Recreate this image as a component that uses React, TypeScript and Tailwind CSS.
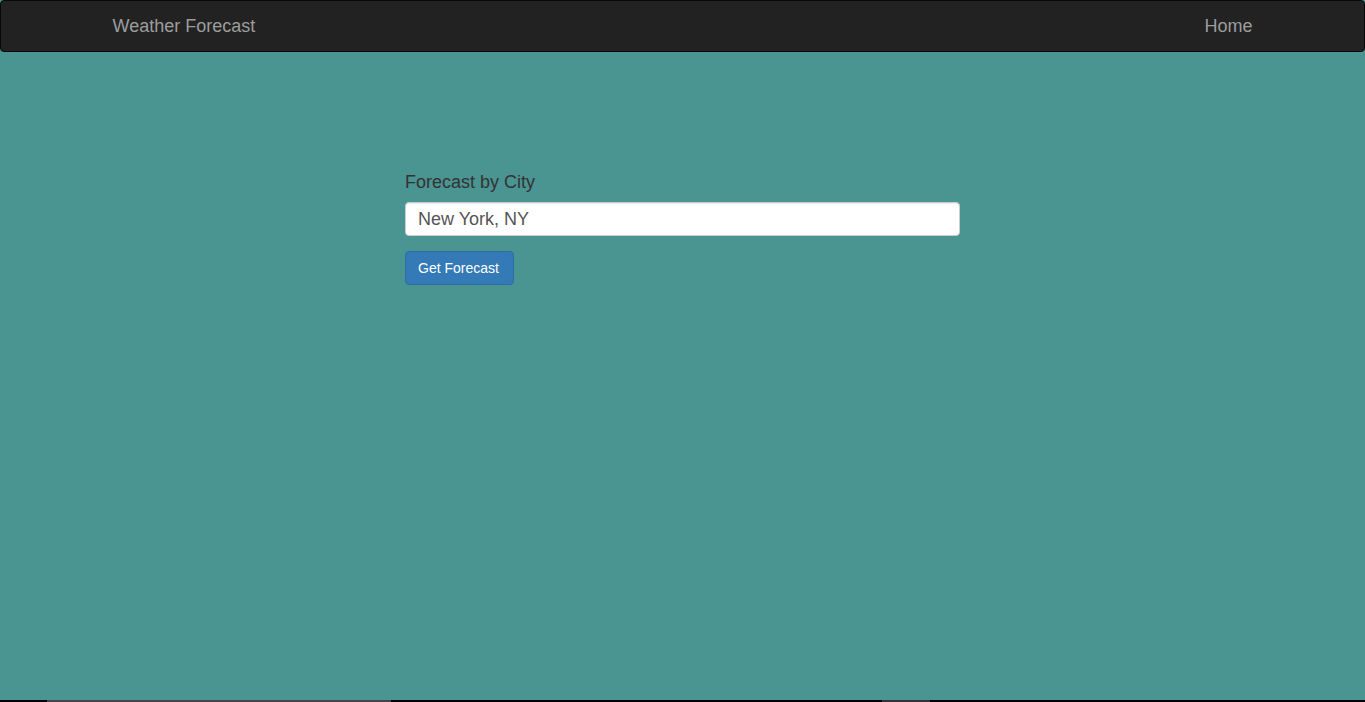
export default function App() {
  return (
    <div
      className="flex h-[702px] w-full flex-col bg-black"
      style={{ fontFamily: '"Liberation Sans", Arial, Helvetica, sans-serif' }}
    >
      <div className="flex h-[700px] flex-col bg-[#4a9491]">
        <nav className="h-[52px] rounded-[4px] border border-[#080808] bg-[#222222]">
          <div className="mx-auto flex h-[50px] w-[1170px] items-center justify-between px-[15px]">
            <a className="px-0 text-[18px] leading-[20px] text-[#9d9d9d]">Weather Forecast</a>
            <a className="pr-0 text-[18px] leading-[20px] text-[#9d9d9d]">Home</a>
          </div>
        </nav>
        <div className="mx-auto w-[1170px] pt-[118px]">
          <div className="ml-[307.5px] w-[555px]">
            <label className="mb-[6px] inline-block text-[18px] leading-[25.7px] text-[#333333]">
              Forecast by City
            </label>
            <input
              type="text"
              defaultValue="New York, NY"
              className="block h-[34px] w-full rounded-[4px] border border-[#cccccc] bg-white px-[12px] pt-[7px] pb-[5px] text-[18px] text-[#555555] shadow-[inset_0_1px_1px_rgba(0,0,0,0.075)] outline-none"
            />
            <button className="mt-[15px] h-[34px] w-[109px] rounded-[4px] border border-[#2e6da4] bg-[#337ab7] px-[12px] text-left text-[14px] leading-[20px] text-white">
              Get Forecast
            </button>
          </div>
        </div>
      </div>
      <div className="flex h-[2px] w-full">
        <div className="w-[47px] bg-black" />
        <div className="w-[344px] bg-[#444444]" />
        <div className="w-[491px] bg-black" />
        <div className="w-[48px] bg-[#333333]" />
        <div className="flex-1 bg-black" />
      </div>
    </div>
  );
}
